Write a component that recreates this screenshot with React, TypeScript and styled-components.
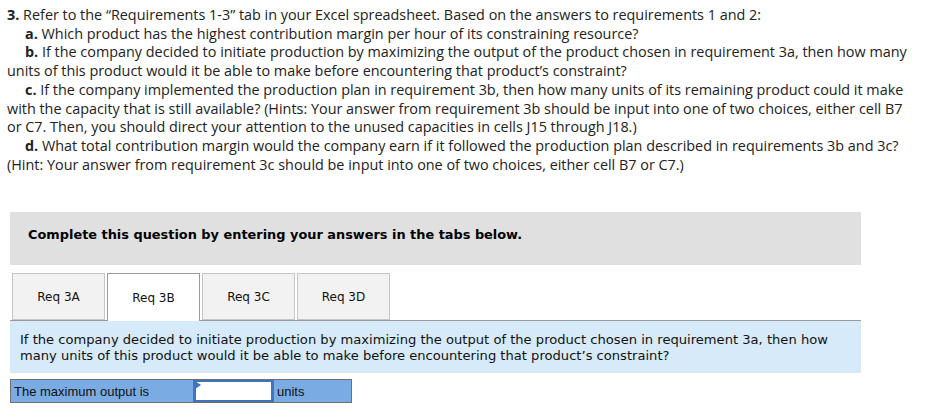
import React from "react";
import styled, { createGlobalStyle } from "styled-components";

const Global = createGlobalStyle`
  html, body { margin: 0; padding: 0; background: #fff; }
  body { font-family: "Open Sans", "Liberation Sans", sans-serif; color: #1a1a1a; }
`;

const Page = styled.div`
  width: 945px;
  padding: 6px 0 0 0;
  box-sizing: border-box;
`;

const Question = styled.div`
  padding: 0 0 0 7px;
  font-family: "Open Sans", "Liberation Sans", sans-serif;
  font-size: 14.4px;
  line-height: 18.7px;
  color: #222;
`;

const Para = styled.p<{ $indent?: boolean }>`
  margin: 0;
  text-indent: ${(p) => (p.$indent ? "18px" : "0")};
`;

const Instructions = styled.div`
  margin: 38px 0 0 10px;
  width: 851px;
  height: 53px;
  background: #e0e0e0;
  padding: 15px 0 0 18px;
  box-sizing: border-box;
  font-family: "DejaVu Sans", Verdana, sans-serif;
  font-weight: bold;
  font-size: 12.9px;
  line-height: 16px;
  color: #000;
`;

const Tabs = styled.div`
  display: flex;
  gap: 2px;
  margin: 8px 0 0 12px;
  position: relative;
  z-index: 1;
`;

const Tab = styled.div<{ $active?: boolean }>`
  width: 93px;
  height: ${(p) => (p.$active ? "48px" : "47px")};
  box-sizing: border-box;
  display: flex;
  align-items: center;
  justify-content: center;
  background: ${(p) => (p.$active ? "#fff" : "#f2f2f2")};
  border: 1px solid ${(p) => (p.$active ? "#9a9a9a" : "#c6c6c6")};
  border-bottom: ${(p) => (p.$active ? "none" : "1px solid #c6c6c6")};
  font-family: "DejaVu Sans", Verdana, sans-serif;
  font-size: 12px;
  color: #111;
  margin-bottom: ${(p) => (p.$active ? "-1px" : "0")};
  padding-top: ${(p) => (p.$active ? "1px" : "0")};
`;

const Panel = styled.div`
  margin-left: 10px;
  width: 851px;
  box-sizing: border-box;
  border-top: 1px solid #9a9a9a;
  background: #d6eaf9;
  padding: 11px 30px 9px 10px;
  font-family: "DejaVu Sans", Verdana, sans-serif;
  font-size: 13.1px;
  line-height: 16px;
  color: #111;
`;

const AnswerRow = styled.div`
  margin: 6px 0 0 10px;
  display: grid;
  grid-template-columns: 183px 80px 79px;
  width: 342px;
  height: 24px;
  box-sizing: border-box;
  border: 1px solid #6f6f6f;
  background: #7aabe3;
  font-family: "Liberation Sans", Arial, sans-serif;
  font-size: 13px;
  color: #111;
`;

const Cell = styled.div`
  display: flex;
  align-items: center;
  padding-left: 3px;
  border-right: 1px solid #6f6f6f;
  &:last-child { border-right: none; }
`;

const InputWrap = styled.div`
  position: relative;
  display: flex;
  border-right: 1px solid #6f6f6f;
`;

const Input = styled.input`
  width: 100%;
  height: 100%;
  box-sizing: border-box;
  border: 2px solid #3d74bd;
  background: #fff;
  margin: 0;
  padding: 0 3px;
  outline: none;
`;

const Marker = styled.span`
  position: absolute;
  left: 1px;
  top: 1px;
  width: 0;
  height: 0;
  border-top: 4px solid transparent;
  border-bottom: 4px solid transparent;
  border-left: 6px solid #3d74bd;
`;

export default function App() {
  return (
    <>
      <Global />
      <Page>
        <Question>
          <Para>
            <b>3.</b> Refer to the “Requirements 1-3” tab in your Excel spreadsheet. Based on the answers to requirements 1 and 2:
          </Para>
          <Para $indent>
            <b>a.</b> Which product has the highest contribution margin per hour of its constraining resource?
          </Para>
          <Para $indent>
            <b>b.</b> If the company decided to initiate production by maximizing the output of the product chosen in requirement 3a, then how many
            <br />
            units of this product would it be able to make before encountering that product’s constraint?
          </Para>
          <Para $indent>
            <b>c.</b> If the company implemented the production plan in requirement 3b, then how many units of its remaining product could it make
            <br />
            with the capacity that is still available? (Hints: Your answer from requirement 3b should be input into one of two choices, either cell B7
            <br />
            or C7. Then, you should direct your attention to the unused capacities in cells J15 through J18.)
          </Para>
          <Para $indent>
            <b>d.</b> What total contribution margin would the company earn if it followed the production plan described in requirements 3b and 3c?
            <br />
            (Hint: Your answer from requirement 3c should be input into one of two choices, either cell B7 or C7.)
          </Para>
        </Question>
        <Instructions>Complete this question by entering your answers in the tabs below.</Instructions>
        <Tabs>
          <Tab>Req 3A</Tab>
          <Tab $active>Req 3B</Tab>
          <Tab>Req 3C</Tab>
          <Tab>Req 3D</Tab>
        </Tabs>
        <Panel>
          If the company decided to initiate production by maximizing the output of the product chosen in requirement 3a, then how many units of this product would it be able to make before encountering that product’s constraint?
        </Panel>
        <AnswerRow>
          <Cell>The maximum output is</Cell>
          <InputWrap>
            <Input type="text" />
            <Marker />
          </InputWrap>
          <Cell>units</Cell>
        </AnswerRow>
      </Page>
    </>
  );
}
